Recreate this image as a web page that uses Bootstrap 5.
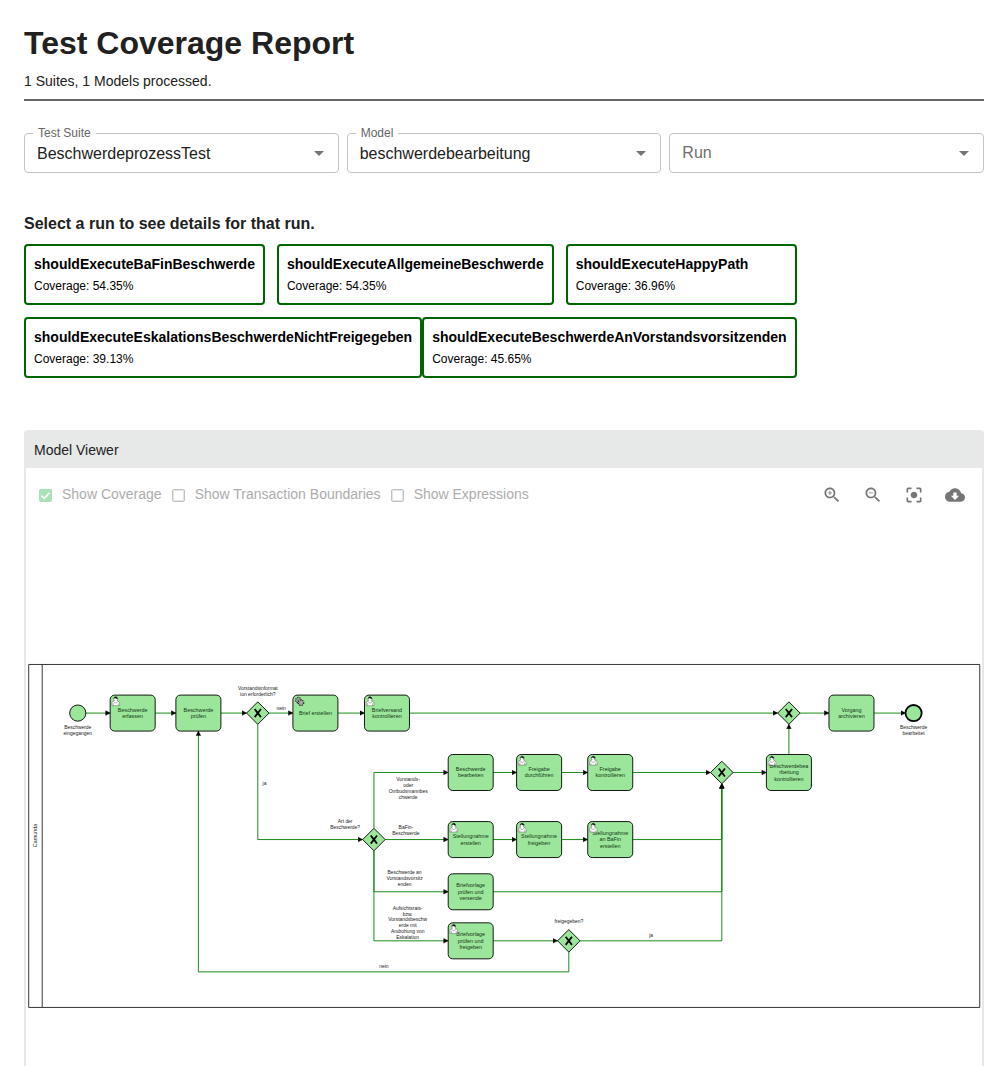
<!DOCTYPE html>
<html lang="en">
<head>
<meta charset="utf-8">
<meta name="viewport" content="width=device-width, initial-scale=1">
<title>Test Coverage Report</title>
<link href="https://cdn.jsdelivr.net/npm/bootstrap@5.3.0/dist/css/bootstrap.min.css" rel="stylesheet">
<style>
  body { font-family: "Liberation Sans", Arial, sans-serif; font-size: 14px; line-height: 20px; color: #212121; }
  .page { padding: 24px 15px 0 24px; }
  .report-head { border-bottom: 2px solid #666; padding-bottom: 8px; margin-bottom: 32px; }
  .report-head h1 { font-size: 32px; line-height: 38px; font-weight: 700; margin-bottom: 9px; }
  .filters { display: grid; grid-template-columns: repeat(3, 1fr); gap: 8px; }
  .filter-field { position: relative; }
  .filter-field label { position: absolute; top: -8px; left: 9px; padding: 0 5px; background: #fff; font-size: 12px; line-height: 16px; color: #666; }
  .filter-field .form-select { height: 40px; padding: 1px 40px 0 12px; border: 1px solid #c4c4c4; border-radius: 4px; font-size: 16px; line-height: 24px; color: #212121; background-position: right 7px center; background-size: 24px 24px;
    background-image: url("data:image/svg+xml,%3csvg xmlns='http://www.w3.org/2000/svg' viewBox='0 0 24 24'%3e%3cpath fill='%23757575' d='M7 10l5 5 5-5z'/%3e%3c/svg%3e"); }
  .filter-field .is-empty { padding-top: 0; color: #707070; }
  .runs-title { font-size: 16px; line-height: 20px; font-weight: 700; margin: 41px 0 10px; }
  .runs { width: fit-content; display: grid; gap: 12px; }
  .runs-spaced { gap: 12px; }
  .run-card { background: #fff; border: 2px solid #006400; border-radius: 4px; padding: 8px 8px 9px; color: #000; text-align: left; }
  .run-card strong { display: block; margin-bottom: 4px; line-height: 20px; }
  .run-card span { display: block; font-size: 12px; line-height: 16px; }
  .viewer { margin-top: 52px; border: 2px solid #e7e9e8; border-width: 0 2px; border-radius: 4px 4px 0 0; }
  .viewer-head { background: #e7e9e8; height: 38px; padding: 2px 8px 0; font-size: 14px; line-height: 20px; font-weight: 400; border-radius: 3px 3px 0 0; }
  .viewer-tools { height: 52px; padding: 0 7px 0 13px; }
  .options { gap: 10px; }
  .option { display: flex; align-items: center; gap: 10px; color: #adadad; }
  .option input { appearance: none; width: 13px; height: 13px; margin: 3px 0 0; border: 1px solid #c2c2c2; outline: 1px solid #e4e4e4; outline-offset: -2px; border-radius: 2px; }
  .option input:checked { border: 0; outline: 0; background: #a9e2b6 url("data:image/svg+xml,%3csvg xmlns='http://www.w3.org/2000/svg' viewBox='0 0 13 13'%3e%3cpath fill='none' stroke='%23fff' stroke-width='1.7' d='M2.5 6.7l2.7 2.7 5.3-5.6'/%3e%3c/svg%3e"); }
  .tool-btn { width: 41px; height: 40px; padding: 2px 0 0; border: 0; background: none; color: #757575; }
  .tool-btn svg { width: 20px; height: 20px; fill: currentColor; display: block; margin: auto; }
  .diagram { display: block; width: 100%; height: auto; font-family: "Liberation Sans", Arial, sans-serif; font-size: 12px; text-anchor: middle; }
  .diagram .shape { fill: #9be69b; stroke: #000; stroke-width: 2px; }
  .diagram .flow { fill: none; stroke: #008000; stroke-width: 2px; marker-end: url(#arrow); }
  .diagram .pool { fill: none; stroke: #222; stroke-width: 2px; }
  .diagram .names { fill: #143814; }
  .diagram .labels { font-size: 11px; fill: #222; }
</style>
</head>
<body>
<div class="page min-vh-100 d-flex flex-column">
  <header class="report-head">
    <h1>Test Coverage Report</h1>
    <p class="mb-0">1 Suites, 1 Models processed.</p>
  </header>

  <form class="filters">
    <div class="filter-field">
      <select class="form-select" id="suite"><option>BeschwerdeprozessTest</option></select>
      <label for="suite">Test Suite</label>
    </div>
    <div class="filter-field">
      <select class="form-select" id="model"><option>beschwerdebearbeitung</option></select>
      <label for="model">Model</label>
    </div>
    <div class="filter-field">
      <select class="form-select is-empty" id="run" aria-label="Run"><option>Run</option></select>
    </div>
  </form>

  <section>
    <h2 class="runs-title">Select a run to see details for that run.</h2>
    <div class="runs">
      <div class="runs-spaced d-flex">
        <button type="button" class="run-card"><strong>shouldExecuteBaFinBeschwerde</strong><span>Coverage: 54.35%</span></button>
        <button type="button" class="run-card"><strong>shouldExecuteAllgemeineBeschwerde</strong><span>Coverage: 54.35%</span></button>
        <button type="button" class="run-card flex-grow-1"><strong>shouldExecuteHappyPath</strong><span>Coverage: 36.96%</span></button>
      </div>
      <div class="d-flex">
        <button type="button" class="run-card"><strong>shouldExecuteEskalationsBeschwerdeNichtFreigegeben</strong><span>Coverage: 39.13%</span></button>
        <button type="button" class="run-card flex-grow-1"><strong>shouldExecuteBeschwerdeAnVorstandsvorsitzenden</strong><span>Coverage: 45.65%</span></button>
      </div>
    </div>
  </section>

  <section class="viewer flex-grow-1">
    <h2 class="viewer-head d-flex align-items-center mb-0">Model Viewer</h2>
    <div class="viewer-tools d-flex align-items-center justify-content-between">
      <div class="options d-flex">
        <label class="option"><input type="checkbox" checked disabled>Show Coverage</label>
        <label class="option"><input type="checkbox" disabled>Show Transaction Boundaries</label>
        <label class="option"><input type="checkbox" disabled>Show Expressions</label>
      </div>
      <div class="d-flex">
        <button type="button" class="tool-btn" aria-label="Zoom in"><svg viewBox="0 0 24 24"><path d="M15.500 14h-.79l-.28-.27C15.410 12.590 16 11.110 16 9.500 16 5.910 13.090 3 9.500 3S3 5.910 3 9.500 5.910 16 9.500 16c1.610 0 3.090-.59 4.230-1.570l.27.28v.79l5 4.990L20.490 19l-4.990-5zm-6 0C7.010 14 5 11.990 5 9.500S7.010 5 9.500 5 14 7.010 14 9.500 11.990 14 9.500 14zm2.500-4h-2v2H9v-2H7V9h2V7h1v2h2v1z"/></svg></button>
        <button type="button" class="tool-btn" aria-label="Zoom out"><svg viewBox="0 0 24 24"><path d="M15.500 14h-.79l-.28-.27C15.410 12.590 16 11.110 16 9.500 16 5.910 13.090 3 9.500 3S3 5.910 3 9.500 5.910 16 9.500 16c1.610 0 3.090-.59 4.230-1.570l.27.28v.79l5 4.990L20.490 19l-4.990-5zm-6 0C7.010 14 5 11.990 5 9.500S7.010 5 9.500 5 14 7.010 14 9.500 11.990 14 9.500 14zM7 9h5v1H7z"/></svg></button>
        <button type="button" class="tool-btn" aria-label="Fit to view"><svg viewBox="0 0 24 24"><path d="M12 8c-2.210 0-4 1.790-4 4s1.790 4 4 4 4-1.790 4-4-1.790-4-4-4zm-7 7H3v4c0 1.100.9 2 2 2h4v-2H5v-4zM5 5h4V3H5c-1.100 0-2 .9-2 2v4h2V5zm14-2h-4v2h4v4h2V5c0-1.100-.9-2-2-2zm0 16h-4v2h4c1.100 0 2-.9 2-2v-4h-2v4z"/></svg></button>
        <button type="button" class="tool-btn" aria-label="Download"><svg viewBox="0 0 24 24" overflow="visible"><path d="M19.350 10.040C18.670 6.590 15.640 4 12 4 9.110 4 6.600 5.640 5.350 8.040 2.340 8.360 0 10.910 0 14c0 3.310 2.690 6 6 6h13c2.760 0 5-2.240 5-5 0-2.640-2.050-4.780-4.650-4.960zM17 13l-5 5-5-5h3V9h4v4h3z"/></svg></button>
      </div>
    </div>

    <svg class="diagram" viewBox="0 0 2124 1213" role="img" aria-label="Process model">
      <defs>
        <marker id="arrow" viewBox="0 0 20 20" refX="11" refY="10" markerWidth="20" markerHeight="20" markerUnits="userSpaceOnUse" orient="auto"><path d="M1 5L11 10L1 15z" stroke="#000" stroke-width="1"/></marker>
        <rect id="task" x="-50" y="-40" width="100" height="80" rx="10"/>
        <path id="gate" d="M0-25L25 0L0 25L-25 0z"/>
        <path id="cross" d="M-7-9L7 9M7-9L-7 9" fill="none" stroke="#000" stroke-width="4"/>
        <g id="user" transform="translate(-35 -28)" fill="#fff" stroke="#333" stroke-width=".8">
          <path d="m0 0c.909-.845 1.594-2.049 1.594-3.385 0-2.554-1.805-4.622-4.357-4.622-2.552 0-4.288 2.068-4.288 4.622 0 1.348.974 2.562 1.896 3.405-.529.187-5.669 2.097-5.794 4.756v6.718h17v-6.718c0-2.298-5.528-4.595-6.051-4.776zm-8 6v5.500m11 0v-5"/>
          <path d="m2.162 1.009c0 2.447-2.158 4.431-4.821 4.431-2.665 0-4.822-1.981-4.822-4.431"/>
          <path d="m-6.900-3.800s2.251-2.358 4.274-1.177c2.024 1.181 4.221 1.537 4.124.965-.098-.57-.117-3.791-4.191-4.136-3.572-.304-4.207 3.670-4.207 4.348z" fill="#000"/>
        </g>
        <g id="gears" fill="#b9cdb9" stroke="#333">
          <circle cx="-38" cy="-29" r="6" stroke-width="3" stroke-dasharray="3 2"/><circle cx="-38" cy="-29" r="5"/><circle cx="-38" cy="-29" r="2" fill="#9be69b"/>
          <circle cx="-32" cy="-23" r="6" stroke-width="3" stroke-dasharray="3 2"/><circle cx="-32" cy="-23" r="5"/><circle cx="-32" cy="-23" r="2" fill="#fff"/>
        </g>
      </defs>

      <path class="pool" d="M6 321H2119V1083H6zM36 321V1083"/>

      <g>
        <path class="flow" d="M132 429H187"/><path class="flow" d="M287 429H333"/><path class="flow" d="M433 429H490"/>
        <path class="flow" d="M540 429H593"/><path class="flow" d="M693 429H752"/><path class="flow" d="M852 429H1670"/>
        <path class="flow" d="M1720 429H1784"/><path class="flow" d="M1884 429H1954"/>
        <path class="flow" d="M515 454V710H748"/>
        <path class="flow" d="M773 685V561H938"/><path class="flow" d="M798 710H938"/>
        <path class="flow" d="M773 735V826H938"/><path class="flow" d="M773 735V935H938"/>
        <path class="flow" d="M1038 561H1090"/><path class="flow" d="M1190 561H1248"/><path class="flow" d="M1348 561H1521"/>
        <path class="flow" d="M1571 561H1645"/><path class="flow" d="M1695 521V454"/>
        <path class="flow" d="M1038 710H1090"/><path class="flow" d="M1190 710H1248"/><path class="flow" d="M1348 710H1546V586"/>
        <path class="flow" d="M1038 826H1546V586"/><path class="flow" d="M1038 935H1181"/>
        <path class="flow" d="M1231 935H1546V586"/><path class="flow" d="M1206 960V1004H383V469"/>
      </g>

      <g class="shape">
        <circle cx="115" cy="429" r="18"/>
        <use href="#task" x="237" y="429"/><use href="#task" x="383" y="429"/><use href="#task" x="643" y="429"/><use href="#task" x="802" y="429"/><use href="#task" x="1834" y="429"/>
        <use href="#task" x="988" y="561"/><use href="#task" x="1140" y="561"/><use href="#task" x="1298" y="561"/><use href="#task" x="1695" y="561"/>
        <use href="#task" x="988" y="710"/><use href="#task" x="1140" y="710"/><use href="#task" x="1298" y="710"/>
        <use href="#task" x="988" y="826"/><use href="#task" x="988" y="935"/>
        <use href="#gate" x="515" y="429"/><use href="#gate" x="1695" y="429"/><use href="#gate" x="1546" y="561"/><use href="#gate" x="773" y="710"/><use href="#gate" x="1206" y="935"/>
      </g>
      <circle cx="1972" cy="429" r="18" fill="#9be69b" stroke="#000" stroke-width="4"/>
      <use href="#cross" x="515" y="429"/><use href="#cross" x="1695" y="429"/><use href="#cross" x="1546" y="561"/><use href="#cross" x="773" y="710"/><use href="#cross" x="1206" y="935"/>

      <g class="names">
        <text><tspan x="237" y="426">Beschwerde</tspan><tspan x="237" y="440">erfassen</tspan></text>
        <text><tspan x="383" y="426">Beschwerde</tspan><tspan x="383" y="440">prüfen</tspan></text>
        <text x="643" y="433">Brief erstellen</text>
        <text><tspan x="802" y="426">Briefversand</tspan><tspan x="802" y="440">kontrollieren</tspan></text>
        <text><tspan x="1834" y="426">Vorgang</tspan><tspan x="1834" y="440">archivieren</tspan></text>
        <text><tspan x="988" y="558">Beschwerde</tspan><tspan x="988" y="572">bearbeiten</tspan></text>
        <text><tspan x="1140" y="558">Freigabe</tspan><tspan x="1140" y="572">durchführen</tspan></text>
        <text><tspan x="1298" y="558">Freigabe</tspan><tspan x="1298" y="572">kontrollieren</tspan></text>
        <text><tspan x="1695" y="551">Beschwerdebea</tspan><tspan x="1695" y="565">rbeitung</tspan><tspan x="1695" y="579">kontrollieren</tspan></text>
        <text><tspan x="988" y="707">Stellungnahme</tspan><tspan x="988" y="721">erstellen</tspan></text>
        <text><tspan x="1140" y="707">Stellungnahme</tspan><tspan x="1140" y="721">freigeben</tspan></text>
        <text><tspan x="1298" y="700">Stellungnahme</tspan><tspan x="1298" y="714">an BaFin</tspan><tspan x="1298" y="728">erstellen</tspan></text>
        <text><tspan x="988" y="816">Briefvorlage</tspan><tspan x="988" y="830">prüfen und</tspan><tspan x="988" y="844">versende</tspan></text>
        <text><tspan x="988" y="925">Briefvorlage</tspan><tspan x="988" y="939">prüfen und</tspan><tspan x="988" y="953">freigeben</tspan></text>
      </g>

      <use href="#user" x="237" y="429"/><use href="#gears" x="643" y="429"/><use href="#user" x="802" y="429"/>
      <use href="#user" x="1140" y="561"/><use href="#user" x="1298" y="561"/><use href="#user" x="1695" y="561"/>
      <use href="#user" x="988" y="710"/><use href="#user" x="1140" y="710"/><use href="#user" x="1298" y="710"/><use href="#user" x="988" y="935"/>

      <g class="labels">
        <text transform="translate(24 701) rotate(-90)" font-size="12">Camunda</text>
        <text><tspan x="115" y="464">Beschwerde</tspan><tspan x="115" y="477">eingegangen</tspan></text>
        <text><tspan x="1972" y="464">Beschwerde</tspan><tspan x="1972" y="477">bearbeitet</tspan></text>
        <text><tspan x="515" y="378">Vorstandsinformat</tspan><tspan x="515" y="391">ion erforderlich?</tspan></text>
        <text x="567" y="423">nein</text>
        <text x="530" y="589">ja</text>
        <text><tspan x="709" y="674">Art der</tspan><tspan x="709" y="687">Beschwerde?</tspan></text>
        <text><tspan x="849" y="579">Vorstands-</tspan><tspan x="849" y="593">oder</tspan><tspan x="849" y="607">Ombudsmannbes</tspan><tspan x="849" y="620">chwerde</tspan></text>
        <text><tspan x="844" y="687">BaFin-</tspan><tspan x="844" y="700">Beschwerde</tspan></text>
        <text><tspan x="841" y="787">Beschwerde an</tspan><tspan x="841" y="800">Vorstandsvorsitz</tspan><tspan x="841" y="813">enden</tspan></text>
        <text><tspan x="848" y="866">Aufsichtsrats-</tspan><tspan x="848" y="879">bzw.</tspan><tspan x="848" y="892">Vorstandsbeschw</tspan><tspan x="848" y="905">erde mit</tspan><tspan x="848" y="918">Androhung von</tspan><tspan x="848" y="931">Eskalation</tspan></text>
        <text x="1206" y="896">freigegeben?</text>
        <text x="1389" y="927">ja</text>
        <text x="795" y="996">nein</text>
      </g>
    </svg>
  </section>
</div>
<script src="https://cdn.jsdelivr.net/npm/bootstrap@5.3.0/dist/js/bootstrap.bundle.min.js"></script>
</body>
</html>
